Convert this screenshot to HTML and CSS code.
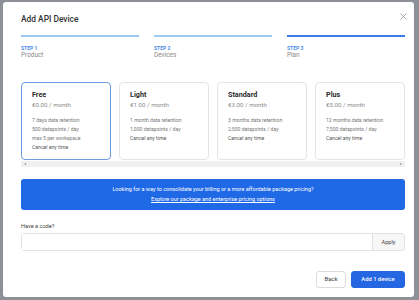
FILE: index.html
```html
<!DOCTYPE html>
<html>
<head>
<meta charset="utf-8">
<link rel="stylesheet" href="styles.css">
</head>
<body>
<div class="modal">
  <div class="header">
    <h1 class="title">Add API Device</h1>
    <button class="close" aria-label="Close">
      <svg width="7" height="7" viewBox="0 0 7 7"><path d="M0.5 0.5L6.5 6.5M6.5 0.5L0.5 6.5" stroke="#9a9a9a" stroke-width="0.8" fill="none"/></svg>
    </button>
  </div>
  <div class="steps">
    <div class="step done"><div class="bar"></div><div class="step-num">STEP 1</div><div class="step-name">Product</div></div>
    <div class="step done"><div class="bar"></div><div class="step-num">STEP 2</div><div class="step-name">Devices</div></div>
    <div class="step active"><div class="bar"></div><div class="step-num">STEP 3</div><div class="step-name">Plan</div></div>
  </div>
  <div class="cards">
    <div class="card selected">
      <div class="card-name">Free</div>
      <div class="card-price">€0.00 / month</div>
      <ul class="feat"><li>7 days data retention</li><li>500 datapoints / day</li><li>max 5 per workspace</li><li class="strong">Cancel any time</li></ul>
    </div>
    <div class="card">
      <div class="card-name">Light</div>
      <div class="card-price">€1.00 / month</div>
      <ul class="feat"><li>1 month data retention</li><li>1,000 datapoints / day</li><li class="strong">Cancel any time</li></ul>
    </div>
    <div class="card">
      <div class="card-name">Standard</div>
      <div class="card-price">€3.00 / month</div>
      <ul class="feat"><li>3 months data retention</li><li>2,500 datapoints / day</li><li class="strong">Cancel any time</li></ul>
    </div>
    <div class="card">
      <div class="card-name">Plus</div>
      <div class="card-price">€5.00 / month</div>
      <ul class="feat"><li>12 months data retention</li><li>7,500 datapoints / day</li><li class="strong">Cancel any time</li></ul>
    </div>
  </div>
  <div class="scrolltrack"><span class="arrow">&#9666;</span><span class="arrow">&#9656;</span></div>
  <div class="banner">
    <div>Looking for a way to consolidate your billing or a more affordable package pricing?</div>
    <a class="banner-link" href="#">Explore our package and enterprise pricing options</a>
  </div>
  <label class="code-label">Have a code?</label>
  <div class="code-group">
    <input class="code-input" type="text">
    <button class="apply">Apply</button>
  </div>
  <div class="footer">
    <button class="btn back">Back</button>
    <button class="btn primary">Add 1 device</button>
  </div>
</div>
</body>
</html>
```

FILE: styles.css
```css
* { box-sizing: border-box; }
html, body { margin: 0; padding: 0; }
body {
  background: #8d9097;
  font-family: Roboto, "Liberation Sans", sans-serif;
  width: 419px;
  height: 300px;
  overflow: hidden;
  padding: 2px 0 0 3px;
}
.modal {
  width: 411px;
  height: 295px;
  background: #fff;
  border-radius: 3px;
  padding: 12px 9px 0 18px;
  display: flex;
  flex-direction: column;
}
.header {
  display: flex;
  justify-content: space-between;
  align-items: flex-start;
}
.title {
  margin: 0;
  font-size: 8.4px;
  line-height: 10px;
  font-weight: 500;
  color: #333;
}
.close {
  border: 0;
  background: none;
  padding: 0;
  margin: -1px -2px 0 0;
  width: 7px;
  height: 7px;
  display: flex;
}
.steps {
  display: flex;
  gap: 15px;
  margin-top: 11px;
}
.step { flex: 1; }
.bar { height: 2px; background: #9cc8f4; }
.step.active .bar { background: #3b7ce2; }
.step-num {
  margin-top: 8px;
  font-size: 5px;
  line-height: 6px;
  font-weight: 700;
  color: #4a8be6;
}
.step-name {
  margin-top: 0.5px;
  font-size: 6.4px;
  line-height: 7px;
  color: #888;
}
.cards {
  display: flex;
  gap: 8px;
  margin-top: 23px;
}
.card {
  width: 90px;
  height: 78px;
  border: 1px solid #e4e4e4;
  border-radius: 4px;
  padding: 8px 10px 0;
}
.card.selected { border-color: #6d9be0; }
.card-name {
  font-size: 7.2px;
  line-height: 8px;
  font-weight: 700;
  color: #2a2a2a;
}
.card-price {
  margin-top: 2px;
  font-size: 6.2px;
  line-height: 8px;
  color: #8c8c8c;
}
.feat {
  list-style: none;
  margin: 7px 0 0;
  padding: 0;
}
.feat li {
  font-size: 5.1px;
  line-height: 9.2px;
  color: #777;
  white-space: nowrap;
}
.feat li.strong { color: #555; }
.scrolltrack {
  margin-top: 1px;
  height: 6px;
  background: #f0f0f0;
  display: flex;
  justify-content: space-between;
  align-items: center;
  padding: 0 3px;
}
.arrow {
  font-size: 4px;
  line-height: 6px;
  color: #8a8a8a;
}
.banner {
  margin-top: 12px;
  height: 31px;
  background: #1f68e6;
  border-radius: 3px;
  color: #fff;
  text-align: center;
  padding-top: 5px;
  font-size: 5.5px;
  line-height: 10.6px;
}
.banner-link {
  color: #fff;
  text-decoration: underline;
}
.code-label {
  margin-top: 12px;
  font-size: 5.6px;
  line-height: 8px;
  color: #444;
}
.code-group {
  margin-top: 3px;
  display: flex;
  height: 18px;
  border: 1px solid #e2e2e2;
  border-radius: 3px;
  overflow: hidden;
}
.code-input {
  flex: 1;
  border: 0;
  outline: 0;
  padding: 0 5px;
  font-size: 6px;
}
.apply {
  width: 32px;
  border: 0;
  border-left: 1px solid #e2e2e2;
  background: #f7f7f7;
  font-family: inherit;
  font-size: 5.6px;
  color: #444;
  padding: 0;
}
.footer {
  margin-top: 20px;
  display: flex;
  justify-content: flex-end;
  gap: 5px;
}
.btn {
  height: 17px;
  border-radius: 3px;
  font-family: inherit;
  font-size: 5.8px;
  font-weight: 500;
  padding: 0;
}
.back {
  width: 30px;
  background: #fff;
  border: 1px solid #dcdcdc;
  color: #555;
}
.primary {
  width: 54px;
  background: #2566e2;
  border: 1px solid #2566e2;
  color: #fff;
}
```
